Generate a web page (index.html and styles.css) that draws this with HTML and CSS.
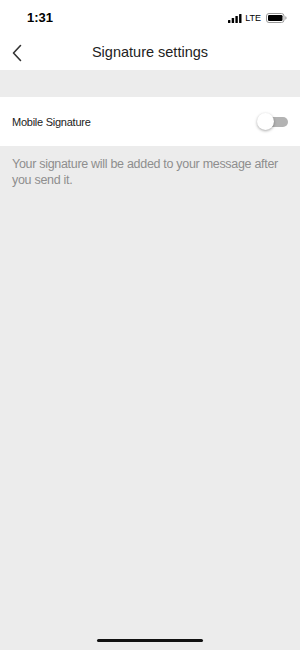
FILE: index.html
```html
<!DOCTYPE html>
<html lang="en">
<head>
    <meta charset="UTF-8">
    <meta name="viewport" content="width=device-width, initial-scale=1.0">
    <title>Signature settings</title>
    <link rel="stylesheet" href="styles.css">
</head>
<body>

<div class="screen">
    <div class="status-bar">
        <span class="time">1:31</span>
        <div class="status-icons">
            <svg class="signal" width="14" height="9" viewBox="0 0 14 9">
                <rect x="0" y="6" width="2.4" height="3" rx="0.5"/>
                <rect x="3.7" y="4" width="2.4" height="5" rx="0.5"/>
                <rect x="7.4" y="2" width="2.4" height="7" rx="0.5"/>
                <rect x="11.1" y="0" width="2.4" height="9" rx="0.5"/>
            </svg>
            <span class="lte">LTE</span>
            <svg class="battery" width="21" height="10" viewBox="0 0 21 10">
                <rect x="0.5" y="0.5" width="17.5" height="9" rx="2.5" fill="none" stroke="#999"/>
                <rect x="2" y="2" width="14.5" height="6" rx="1.2" fill="#000"/>
                <path d="M19.3 3.3 Q20.6 3.6 20.6 5 Q20.6 6.4 19.3 6.7 Z" fill="#999"/>
            </svg>
        </div>
    </div>

    <div class="nav-bar">
        <svg class="back" width="12" height="18" viewBox="0 0 12 18">
            <path d="M9.5 1.5 L2.5 9 L9.5 16.5" fill="none" stroke="#333" stroke-width="1.6" stroke-linecap="round" stroke-linejoin="round"/>
        </svg>
        <h1>Signature settings</h1>
    </div>

    <div class="spacer"></div>

    <div class="setting-row">
        <span class="setting-label">Mobile Signature</span>
        <div class="toggle">
            <div class="toggle-track"></div>
            <div class="toggle-knob"></div>
        </div>
    </div>

    <p class="hint">Your signature will be added to your message after you send it.</p>

    <div class="home-indicator"></div>
</div>

</body>
</html>
```

FILE: styles.css
```css
body {
    margin: 0;
    font-family: "Liberation Sans", Arial, sans-serif;
    background-color: #ececec;
}
.screen {
    position: relative;
    width: 300px;
    height: 650px;
    background-color: #ececec;
    overflow: hidden;
}
.status-bar {
    height: 36px;
    background-color: #fff;
    display: flex;
    align-items: center;
    justify-content: space-between;
    padding: 0 13px 0 27px;
    box-sizing: border-box;
}
.time {
    font-size: 13px;
    font-weight: 600;
    color: #000;
    margin-top: -1px;
}
.status-icons {
    display: flex;
    align-items: center;
    gap: 3px;
}
.lte {
    font-size: 9px;
    color: #000;
}
.battery {
    margin-left: 2px;
}
.nav-bar {
    position: relative;
    height: 34px;
    background-color: #fff;
    display: flex;
    align-items: center;
    justify-content: center;
}
.back {
    position: absolute;
    left: 11px;
    top: 8px;
}
.nav-bar h1 {
    margin: 0;
    font-size: 14.5px;
    font-weight: normal;
    color: #222;
    margin-top: -2px;
}
.spacer {
    height: 27px;
}
.setting-row {
    height: 49px;
    background-color: #fff;
    display: flex;
    align-items: center;
    justify-content: space-between;
    padding: 0 12px;
}
.setting-label {
    font-size: 11px;
    letter-spacing: -0.25px;
    color: #222;
}
.toggle {
    position: relative;
    width: 31px;
    height: 18px;
}
.toggle-track {
    position: absolute;
    left: 3px;
    top: 4px;
    width: 28px;
    height: 10px;
    border-radius: 5px;
    background-color: #b3b3b3;
}
.toggle-knob {
    position: absolute;
    left: 0;
    top: 0;
    width: 17px;
    height: 17px;
    border-radius: 50%;
    background-color: #fff;
    box-shadow: 0 1px 3px rgba(0, 0, 0, 0.35);
}
.hint {
    margin: 10px 12px 0;
    font-size: 12.5px;
    letter-spacing: -0.3px;
    line-height: 16px;
    color: #8e8e8e;
}
.home-indicator {
    position: absolute;
    left: 97px;
    bottom: 8px;
    width: 106px;
    height: 3px;
    border-radius: 2px;
    background-color: #111;
}
```
